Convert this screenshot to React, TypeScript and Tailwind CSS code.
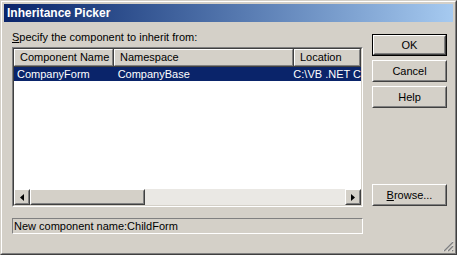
import React from 'react';

const Raised: React.FC<{ className?: string; children?: React.ReactNode }> = ({ className = '', children }) => (
  <div className={`border border-t-white border-l-white border-r-[#404040] border-b-[#404040] ${className}`}>
    <div className="h-full w-full border border-t-[#d4d0c8] border-l-[#d4d0c8] border-r-[#808080] border-b-[#808080] flex items-center justify-center">
      {children}
    </div>
  </div>
);

const Button: React.FC<{ isDefault?: boolean; children: React.ReactNode }> = ({ isDefault, children }) => {
  if (isDefault) {
    return (
      <div className="h-[22px] border border-black">
        <div className="h-full border border-t-white border-l-white border-r-[#404040] border-b-[#404040]">
          <div className="h-full border border-t-[#d4d0c8] border-l-[#d4d0c8] border-r-[#808080] border-b-[#808080] flex items-center justify-center text-[11px]">
            {children}
          </div>
        </div>
      </div>
    );
  }
  return (
    <Raised className="h-[22px] text-[11px]">
      {children}
    </Raised>
  );
};

const HeaderCell: React.FC<{ width?: string; children: React.ReactNode }> = ({ width, children }) => (
  <div className={`${width ?? 'flex-1'} h-full border-r border-b border-r-[#404040] border-b-[#404040]`}>
    <div className="h-full border border-t-white border-l-white border-r-[#808080] border-b-[#808080] pl-[5px] flex items-center text-[11px] whitespace-nowrap overflow-hidden">
      {children}
    </div>
  </div>
);

export default function App() {
  return (
    <div className="w-[457px] h-[255px] bg-[#d4d0c8] text-black font-['Liberation_Sans',Arial,sans-serif] border border-t-[#d4d0c8] border-l-[#d4d0c8] border-r-[#404040] border-b-[#404040]">
      <div className="relative h-full border border-t-white border-l-white border-r-[#808080] border-b-[#808080] p-[2px] flex flex-col">
        <div className="h-[18px] bg-gradient-to-r from-[#0a246a] to-[#a6caf0] text-white font-bold text-[12px] pl-[3px] flex items-center">
          Inheritance Picker
        </div>

        <div className="flex pl-[8px]">
          <div className="w-[351px] flex flex-col">
            <div className="pt-[9px] text-[11px] leading-[13px]">
              <span className="underline">S</span>pecify the component to inherit from:
            </div>

            <div className="mt-[3px] h-[160px] border border-t-[#808080] border-l-[#808080] border-r-white border-b-white">
              <div className="h-full border border-t-[#404040] border-l-[#404040] border-r-[#d4d0c8] border-b-[#d4d0c8] bg-white flex flex-col">
                <div className="h-[18px] flex bg-[#d4d0c8]">
                  <HeaderCell width="w-[100px]">Component Name</HeaderCell>
                  <HeaderCell width="w-[180px]">Namespace</HeaderCell>
                  <HeaderCell>Location</HeaderCell>
                </div>
                <div className="h-[14px] bg-[#0a246a] text-white text-[11px] flex items-center whitespace-nowrap overflow-hidden">
                  <div className="w-[100px] pl-[3px]">CompanyForm</div>
                  <div className="w-[180px] pl-[6px]">CompanyBase</div>
                  <div className="pl-[6px]">C:\VB .NET C</div>
                </div>
                <div className="flex-1" />
                <div className="h-[16px] flex bg-[#eae8e4]">
                  <Raised className="w-[16px] h-full bg-[#d4d0c8]">
                    <svg width="4" height="7" viewBox="0 0 4 7"><path d="M4 0 L0 3.5 L4 7 Z" fill="black" /></svg>
                  </Raised>
                  <Raised className="w-[115px] h-full bg-[#d4d0c8]" />
                  <div className="flex-1" />
                  <Raised className="w-[16px] h-full bg-[#d4d0c8]">
                    <svg width="4" height="7" viewBox="0 0 4 7"><path d="M0 0 L4 3.5 L0 7 Z" fill="black" /></svg>
                  </Raised>
                </div>
              </div>
            </div>

            <div className="mt-[11px] h-[16px] border border-t-[#808080] border-l-[#808080] border-r-white border-b-white text-[11px] leading-[14px] pl-[1px]">
              New component name:ChildForm
            </div>
          </div>

          <div className="ml-[9px] w-[75px] pt-[12px] flex flex-col gap-[4px]">
            <Button isDefault>OK</Button>
            <Button>Cancel</Button>
            <Button>Help</Button>
            <div className="mt-[72px]">
              <Button><span><span className="underline">B</span>rowse...</span></Button>
            </div>
          </div>
        </div>

        <svg className="absolute right-[1px] bottom-[1px]" width="12" height="12" viewBox="0 0 12 12">
          <path d="M11 1 L1 11 M11 5 L5 11 M11 9 L9 11" stroke="white" strokeWidth="1" />
          <path d="M11 2 L2 11 M11 6 L6 11 M11 10 L10 11" stroke="#808080" strokeWidth="1.5" />
        </svg>
      </div>
    </div>
  );
}
